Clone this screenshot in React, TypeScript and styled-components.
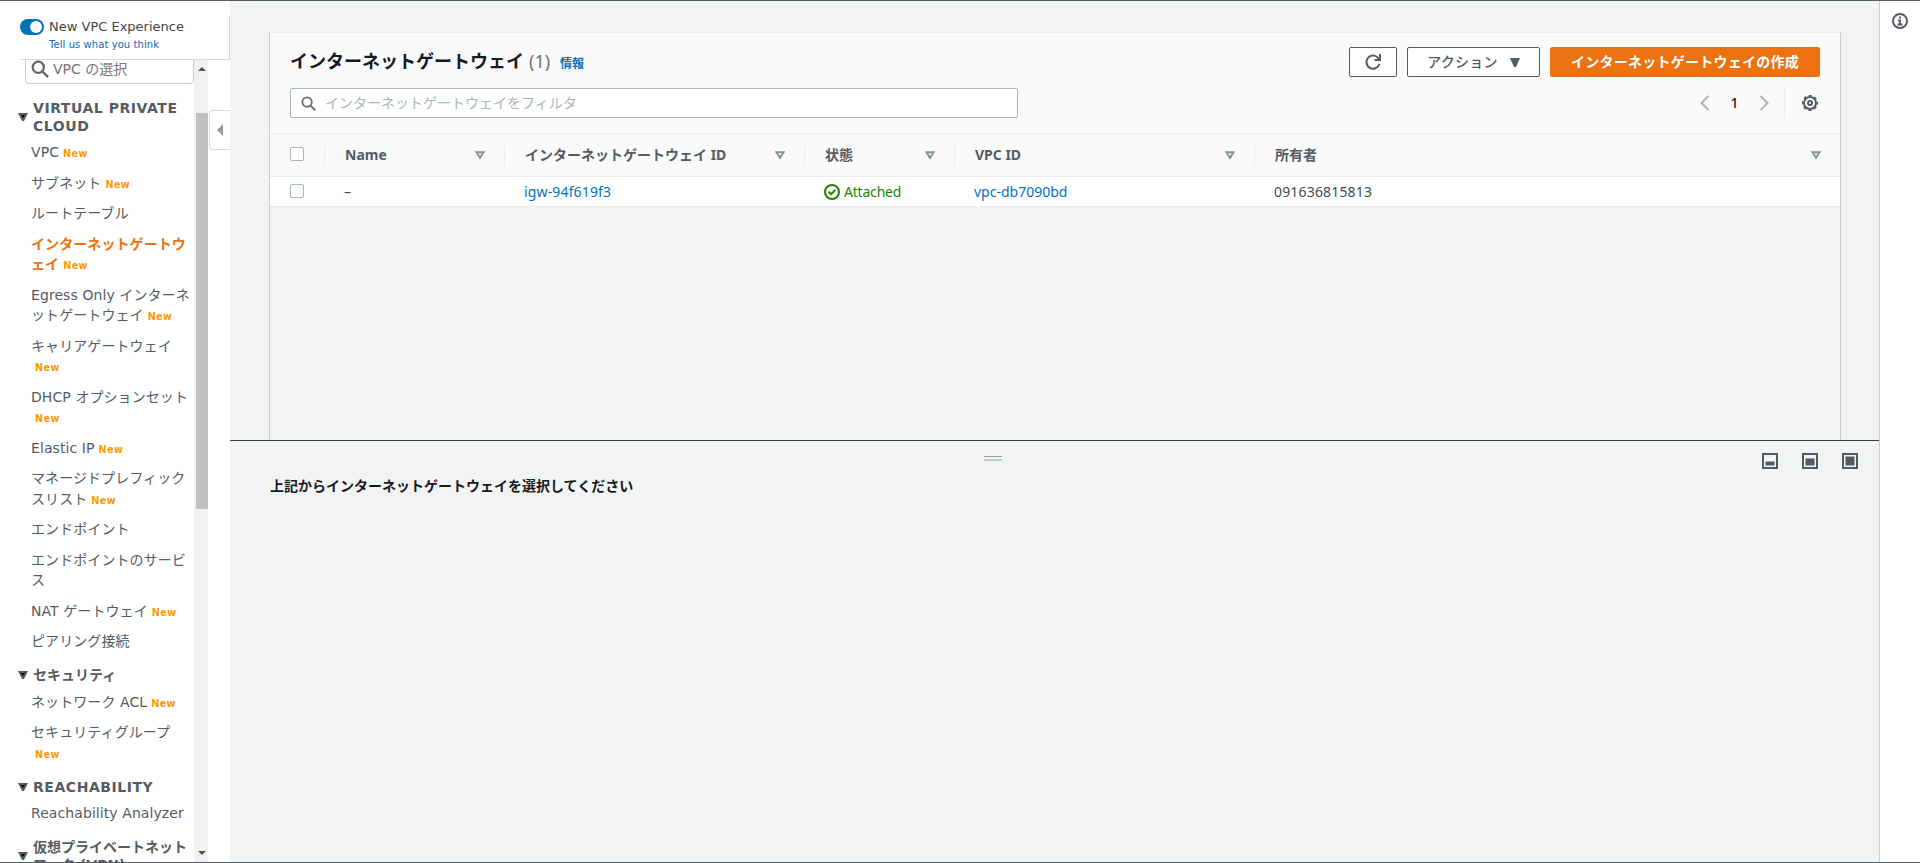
import React from "react";
import styled, { createGlobalStyle } from "styled-components";

const Global = createGlobalStyle`
  * { box-sizing: border-box; }
  body { margin: 0; background: #fff; overflow: hidden; }
  a { text-decoration: none; color: inherit; }
  button { font: inherit; }
`;

const sideFont = `"DejaVu Sans", "Noto Sans CJK JP", sans-serif`;
const mainFont = `"Noto Sans", "Noto Sans CJK JP", sans-serif`;

const Page = styled.div`
  display: flex;
  width: 1920px;
  height: 863px;
  border-top: 1px solid #545b64;
  border-bottom: 1px solid #545b64;
  font: 14px/20px ${mainFont};
  color: #16191f;
  white-space: nowrap;
  overflow: hidden;
`;

const Sidebar = styled.aside`
  position: relative;
  display: flex;
  flex-direction: column;
  width: 230px;
  background: #fff;
  font-family: ${sideFont};
  color: #545b64;
`;

const Experience = styled.div`
  display: flex;
  gap: 5px;
  height: 44px;
  margin: 15px 0 0 20px;
  border-bottom: 1px solid #d5dbdb;
  border-right: 1px solid #d5dbdb;
`;

const Toggle = styled.span`
  display: flex;
  justify-content: flex-end;
  width: 24px;
  height: 16px;
  margin-top: 3px;
  padding: 2px;
  border-radius: 8px;
  background: #0073bb;
  &::after {
    content: "";
    width: 12px;
    height: 12px;
    border-radius: 50%;
    background: #fff;
  }
`;

const ExperienceText = styled.div`
  display: flex;
  flex-direction: column;
  padding-top: 1px;
  font-size: 13px;
  line-height: 20px;
  color: #444;
`;

const Feedback = styled.a`
  font-size: 10px;
  line-height: 16px;
  letter-spacing: 0.07px;
  color: #1166bb;
`;

const ScrollArea = styled.div`
  display: flex;
  flex: 1;
  min-height: 0;
  overflow: hidden;
`;

const Nav = styled.nav`
  width: 194px;
  overflow: hidden;
`;

const VpcSelect = styled.div`
  display: flex;
  align-items: center;
  gap: 4px;
  width: 169px;
  height: 34px;
  margin: -10px 0 0 25px;
  padding: 4px 0 0 5px;
  border: 1px solid #ccc;
  border-radius: 4px;
  color: #757575;
`;

const Group = styled.div<{ $top: number; $gap: number; $spacing?: number }>`
  display: flex;
  align-items: center;
  gap: 5px;
  margin: ${(p) => p.$top}px 0 ${(p) => p.$gap}px 18px;
  font-size: 14px;
  font-weight: bold;
  line-height: 18px;
  letter-spacing: ${(p) => p.$spacing ?? 0}px;
  color: #545b64;
  svg { flex: none; }
`;

const Item = styled.a<{ $active?: boolean }>`
  display: block;
  margin: 0 0 10px 31px;
  font-size: 14px;
  line-height: 20.500px;
  letter-spacing: 0.08px;
  color: ${(p) => (p.$active ? "#ec7211" : "#545b64")};
  font-weight: ${(p) => (p.$active ? "bold" : "normal")};
`;

const Line = styled.span`
  display: block;
  height: 20.500px;
`;

const NewTag = styled.span`
  margin-left: 4px;
  font-size: 9.600px;
  font-weight: bold;
  letter-spacing: 0.450px;
  color: #ff9900;
`;

const Scrollbar = styled.div`
  display: flex;
  flex-direction: column;
  align-items: center;
  justify-content: space-between;
  width: 14px;
  padding: 7px 0;
  background: #f1f1f1;
  svg { margin-left: 2px; }
`;

const Thumb = styled.div`
  width: 12px;
  height: 396px;
  margin: 42px 0 auto 2px;
  background: #c1c1c1;
`;

const Collapse = styled.button`
  position: absolute;
  left: 209px;
  top: 109px;
  display: flex;
  align-items: center;
  width: 21px;
  height: 40px;
  padding: 0 0 0 7px;
  border: 1px solid #d5dbdb;
  border-right: 0;
  border-radius: 4px 0 0 4px;
  background: #fff;
`;

const Main = styled.main`
  display: flex;
  flex-direction: column;
  width: 1650px;
  border-right: 1px solid #c8cccc;
  background: #f2f3f3;
`;

const ListPane = styled.section`
  height: 439px;
  padding: 31px 38px 0 39px;
`;

const Card = styled.div`
  height: 408px;
  border: 1px solid #c6caca;
  border-top-color: #eaeded;
  border-bottom: 0;
`;

const CardHead = styled.header`
  display: flex;
  flex-direction: column;
  gap: 11px;
  height: 101px;
  padding: 14px 20px 0;
  border-bottom: 1px solid #eaeded;
  background: #fafafa;
`;

const HeadRow = styled.div`
  display: flex;
  align-items: center;
  justify-content: space-between;
  height: 30px;
`;

const Title = styled.h1`
  display: flex;
  align-items: baseline;
  margin: 0;
  font-size: 18px;
  line-height: 26px;
`;

const Count = styled.span`
  margin-left: 5px;
  font-weight: normal;
  color: #687078;
`;

const Info = styled.a`
  margin-left: 10px;
  font-size: 12px;
  color: #0073bb;
`;

const Actions = styled.div`
  display: flex;
  gap: 10px;
`;

const Button = styled.button<{ $width: number; $primary?: boolean }>`
  display: flex;
  align-items: center;
  justify-content: center;
  gap: 12px;
  width: ${(p) => p.$width}px;
  height: 30px;
  padding: 0;
  border: 1px solid ${(p) => (p.$primary ? "#ec7211" : "#545b64")};
  border-radius: 2px;
  background: ${(p) => (p.$primary ? "#ec7211" : "#fff")};
  color: ${(p) => (p.$primary ? "#fff" : "#545b64")};
  font-weight: ${(p) => (p.$primary ? "bold" : 500)};
  letter-spacing: 0.250px;
`;

const Filter = styled.div`
  display: flex;
  align-items: center;
  gap: 9px;
  width: 728px;
  height: 30px;
  padding-left: 10px;
  border: 1px solid #aab7b8;
  border-radius: 2px;
  background: #fff;
  color: #aab7b8;
`;

const Pager = styled.div`
  display: flex;
  align-items: center;
  height: 30px;
  color: #16191f;
`;

const PageNumber = styled.span`
  width: 49px;
  text-align: center;
  font-weight: 500;
`;

const Settings = styled.span`
  display: flex;
  align-items: center;
  justify-content: flex-end;
  width: 36px;
  height: 30px;
  margin-left: 15px;
  padding-right: 2px;
  border-left: 1px solid #eaeded;
`;

const Row = styled.div<{ $head?: boolean }>`
  display: grid;
  grid-template-columns: 55px 180px 300px 150px 300px 1fr;
  align-items: center;
  height: ${(p) => (p.$head ? 43 : 30)}px;
  border-bottom: 1px solid #eaeded;
  background: ${(p) => (p.$head ? "#fafafa" : "#fff")};
`;

const HeadCell = styled.div`
  display: flex;
  align-items: center;
  justify-content: space-between;
  height: 21px;
  padding: 0 19px 0 20px;
  border-right: 1px solid #eaeded;
  font-weight: bold;
  color: #545b64;
  &:last-child { border-right: 0; }
`;

const Cell = styled.div<{ $color?: string; $spacing?: number }>`
  display: flex;
  align-items: center;
  gap: 4px;
  padding-left: 19px;
  letter-spacing: ${(p) => p.$spacing ?? 0}px;
  color: ${(p) => p.$color ?? "#444b54"};
`;

const SelectCell = styled(Cell)`
  padding-left: 20px;
`;

const Checkbox = styled.span`
  width: 14px;
  height: 14px;
  margin-bottom: 2px;
  border: 1px solid #aab7b8;
  border-radius: 2px;
  background: #fff;
`;

const Details = styled.section`
  display: flex;
  flex-direction: column;
  flex: 1;
  border-top: 1px solid #2f3f4d;
`;

const DetailsBar = styled.div`
  display: flex;
  align-items: flex-start;
  justify-content: space-between;
  height: 34px;
  padding: 12px 21px 0 754px;
`;

const Grip = styled.div`
  width: 18px;
  height: 5px;
  margin-top: 3px;
  border-top: 1px solid #959b9b;
  border-bottom: 2px solid #c3c7c6;
`;

const Sizes = styled.div`
  display: flex;
  gap: 24px;
`;

const Message = styled.p`
  margin: 0 0 0 40px;
  font-weight: bold;
  line-height: 22px;
`;

const HelpRail = styled.aside`
  flex: 1;
  padding: 12px 0 0 12px;
  background: #fff;
`;

function Search({ size, color }: { size: number; color: string }) {
  return (
    <svg width={size} height={size} viewBox="0 0 16 16" fill="none" stroke={color} strokeWidth="2">
      <circle cx="6.5" cy="6.5" r="5" />
      <path d="m10.2 10.2 5 5" />
    </svg>
  );
}

function Caret() {
  return (
    <svg width="10" height="8" viewBox="0 0 10 8">
      <path d="M0 0h10L6 8H4z" fill="#545b64" />
      <path d="M3 2h4L5 5z" fill="#000" />
    </svg>
  );
}

function SortIcon() {
  return (
    <svg width="10" height="9" viewBox="0 0 10 9" fill="none" stroke="#879596" strokeWidth="2">
      <path d="M1.4 1.2h7.2L5 6.9z" />
    </svg>
  );
}

function Chevron({ right }: { right?: boolean }) {
  return (
    <svg width="10" height="16" viewBox="0 0 10 16" fill="none" stroke="#aab7b8" strokeWidth="2">
      <path d={right ? "m1.5 1 7 7-7 7" : "m8.5 1-7 7 7 7"} />
    </svg>
  );
}

function RefreshIcon() {
  return (
    <svg width="16" height="16" viewBox="0 0 16 16" fill="none" stroke="#545b64" strokeWidth="2">
      <path d="M14.4 10A6.6 6.6 0 1 1 14 5.2" />
      <path d="M15 0v6H9.5" />
    </svg>
  );
}

function GearIcon() {
  return (
    <svg width="16" height="16" viewBox="0 0 16 16" fill="none" stroke="#545b64">
      <circle cx="8" cy="8" r="6" strokeWidth="2" />
      <circle cx="8" cy="8" r="7.400" strokeWidth="1.200" strokeDasharray="3.300 2.511" strokeDashoffset="1.650" />
      <circle cx="8" cy="8" r="2" strokeWidth="2" />
    </svg>
  );
}

function StatusIcon() {
  return (
    <svg width="16" height="16" viewBox="0 0 16 16" fill="none" stroke="#1d8102" strokeWidth="2">
      <circle cx="8" cy="8" r="7" />
      <path d="m4.500 7.800 2.600 2.400 4.300-4.300" />
    </svg>
  );
}

function InfoIcon() {
  return (
    <svg width="16" height="16" viewBox="0 0 16 16" fill="none" stroke="#545b64" strokeWidth="2">
      <circle cx="8" cy="8" r="7" />
      <path d="M6 7.500h2v4M5.500 11.500h5M7 4.500h2" strokeWidth="1.800" />
    </svg>
  );
}

function PanelIcon({ fill }: { fill: number }) {
  return (
    <svg width="16" height="16" viewBox="0 0 16 16">
      <rect x="1" y="1" width="14" height="14" fill="none" stroke="#545b64" strokeWidth="2" />
      <rect x="3.500" y={12.500 - fill} width="9" height={fill} fill="#545b64" />
    </svg>
  );
}

type NavLine = { text: string; tag?: boolean };
type NavEntry = { lines: NavLine[]; active?: boolean };

const cloudItems: NavEntry[] = [
  { lines: [{ text: "VPC", tag: true }] },
  { lines: [{ text: "サブネット", tag: true }] },
  { lines: [{ text: "ルートテーブル" }] },
  { lines: [{ text: "インターネットゲートウ" }, { text: "ェイ", tag: true }], active: true },
  { lines: [{ text: "Egress Only インターネ" }, { text: "ットゲートウェイ", tag: true }] },
  { lines: [{ text: "キャリアゲートウェイ" }, { text: "", tag: true }] },
  { lines: [{ text: "DHCP オプションセット" }, { text: "", tag: true }] },
  { lines: [{ text: "Elastic IP", tag: true }] },
  { lines: [{ text: "マネージドプレフィック" }, { text: "スリスト", tag: true }] },
  { lines: [{ text: "エンドポイント" }] },
  { lines: [{ text: "エンドポイントのサービ" }, { text: "ス" }] },
  { lines: [{ text: "NAT ゲートウェイ", tag: true }] },
  { lines: [{ text: "ピアリング接続" }] },
];

const securityItems: NavEntry[] = [
  { lines: [{ text: "ネットワーク ACL", tag: true }] },
  { lines: [{ text: "セキュリティグループ" }, { text: "", tag: true }] },
];

const reachabilityItems: NavEntry[] = [{ lines: [{ text: "Reachability Analyzer" }] }];

function NavItems({ items }: { items: NavEntry[] }) {
  return (
    <>
      {items.map((item, i) => (
        <Item key={i} $active={item.active}>
          {item.lines.map((line, j) => (
            <Line key={j}>
              {line.text}
              {line.tag && <NewTag>New</NewTag>}
            </Line>
          ))}
        </Item>
      ))}
    </>
  );
}

const columns = ["Name", "インターネットゲートウェイ ID", "状態", "VPC ID", "所有者"];

export default function App() {
  return (
    <>
      <Global />
      <Page>
        <Sidebar>
          <Experience>
            <Toggle />
            <ExperienceText>
              New VPC Experience
              <Feedback>Tell us what you think</Feedback>
            </ExperienceText>
          </Experience>
          <ScrollArea>
            <Nav>
              <VpcSelect>
                <Search size={18} color="#666" />
                VPC の選択
              </VpcSelect>
              <Group $top={15} $gap={7} $spacing={0.55}>
                <Caret />
                <span>
                  VIRTUAL PRIVATE
                  <br />
                  CLOUD
                </span>
              </Group>
              <NavItems items={cloudItems} />
              <Group $top={14} $gap={8}>
                <Caret />
                セキュリティ
              </Group>
              <NavItems items={securityItems} />
              <Group $top={15} $gap={7} $spacing={0.55}>
                <Caret />
                REACHABILITY
              </Group>
              <NavItems items={reachabilityItems} />
              <Group $top={14} $gap={0}>
                <Caret />
                <span>
                  仮想プライベートネット
                  <br />
                  ワーク (VPN)
                </span>
              </Group>
            </Nav>
            <Scrollbar>
              <svg width="8" height="4" viewBox="0 0 8 4"><path d="M0 4 4 0l4 4z" fill="#505050" /></svg>
              <Thumb />
              <svg width="8" height="4" viewBox="0 0 8 4"><path d="M0 0h8L4 4z" fill="#505050" /></svg>
            </Scrollbar>
          </ScrollArea>
          <Collapse>
            <svg width="6" height="12" viewBox="0 0 6 12"><path d="M6 0v12L0 6z" fill="#999" /></svg>
          </Collapse>
        </Sidebar>
        <Main>
          <ListPane>
            <Card>
              <CardHead>
                <HeadRow>
                  <Title>
                    インターネットゲートウェイ
                    <Count>(1)</Count>
                    <Info>情報</Info>
                  </Title>
                  <Actions>
                    <Button $width={48}><RefreshIcon /></Button>
                    <Button $width={133}>
                      アクション
                      <svg width="10" height="9" viewBox="0 0 10 9"><path d="M0 0h10L6 9H4z" fill="#545b64" /></svg>
                    </Button>
                    <Button $width={270} $primary>インターネットゲートウェイの作成</Button>
                  </Actions>
                </HeadRow>
                <HeadRow>
                  <Filter>
                    <Search size={15} color="#687078" />
                    インターネットゲートウェイをフィルタ
                  </Filter>
                  <Pager>
                    <Chevron />
                    <PageNumber>1</PageNumber>
                    <Chevron right />
                    <Settings><GearIcon /></Settings>
                  </Pager>
                </HeadRow>
              </CardHead>
              <Row $head>
                <HeadCell><Checkbox /></HeadCell>
                {columns.map((name) => (
                  <HeadCell key={name}>
                    {name}
                    <SortIcon />
                  </HeadCell>
                ))}
              </Row>
              <Row>
                <SelectCell><Checkbox /></SelectCell>
                <Cell>–</Cell>
                <Cell $color="#0073bb" $spacing={0.15}>igw-94f619f3</Cell>
                <Cell $color="#1d8102" $spacing={-0.2}><StatusIcon />Attached</Cell>
                <Cell $color="#0073bb">vpc-db7090bd</Cell>
                <Cell $spacing={0.17}>091636815813</Cell>
              </Row>
            </Card>
          </ListPane>
          <Details>
            <DetailsBar>
              <Grip />
              <Sizes>
                <PanelIcon fill={4} />
                <PanelIcon fill={7} />
                <PanelIcon fill={9} />
              </Sizes>
            </DetailsBar>
            <Message>上記からインターネットゲートウェイを選択してください</Message>
          </Details>
        </Main>
        <HelpRail><InfoIcon /></HelpRail>
      </Page>
    </>
  );
}
